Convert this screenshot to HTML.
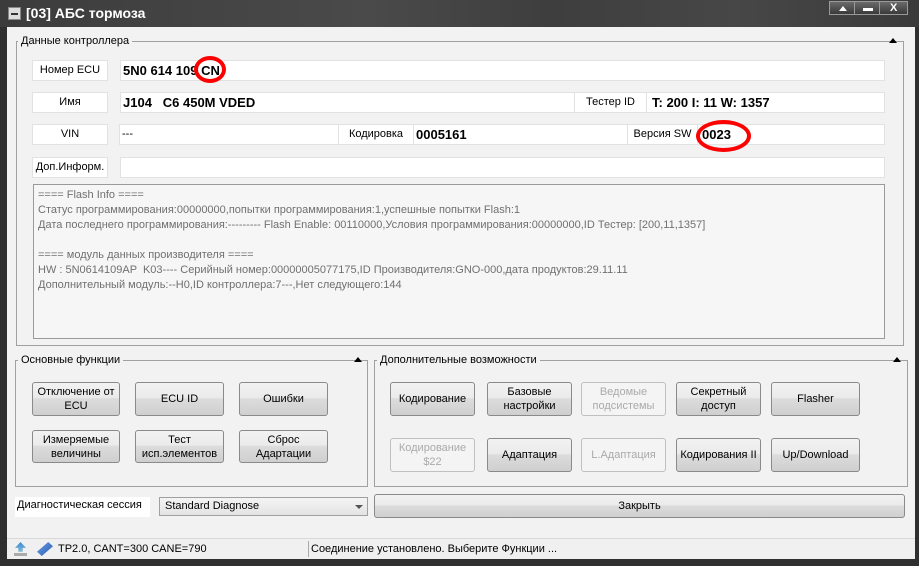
<!DOCTYPE html>
<html><head><meta charset="utf-8"><style>
*{margin:0;padding:0;box-sizing:border-box}
body{width:919px;height:566px;overflow:hidden;background:#2f2f2f;font-family:"Liberation Sans","DejaVu Sans",sans-serif;font-size:11px;color:#000;position:relative}
.a{position:absolute}
.title{left:0;top:0;width:919px;height:27px;background:linear-gradient(90deg,#3c3c3c 0%,#4a4a4a 40%,#3e3e3e 60%,#474747 80%,#3a3a3a 100%)}
.client{left:7px;top:27px;width:908px;height:532px;background:#f2f2f2}
.box{position:absolute;background:#fff;border:1px solid #e2e2e2}
.lbl{text-align:center;line-height:19px;font-size:11px}
.val{font-weight:bold;font-size:13px;line-height:19px;padding-left:2px}
.grp{position:absolute;border:1px solid #a0a0a0}
.gt{position:absolute;background:#f2f2f2;padding:0 3px;font-size:11px;line-height:12px}
.btn{position:absolute;border:1px solid #8a8a8a;border-radius:3px;background:linear-gradient(#f2f2f2 0%,#ebebeb 45%,#dcdcdc 50%,#cfcfcf 100%);text-align:center;font-size:11px;line-height:14px;display:flex;align-items:center;justify-content:center}
.dis{border-color:#c0c0c0;background:#f4f4f4;color:#aaa}
.tri{position:absolute;width:0;height:0;border-left:4px solid transparent;border-right:4px solid transparent;border-bottom:5px solid #000}
.ring{position:absolute;border:4px solid #f00;border-radius:50%}
</style></head><body>
<div class="a title"></div>
<div class="a" style="left:8px;top:7px;width:13px;height:13px;background:#ddd;border:1px solid #888"><div style="margin:5px 2px;height:2px;background:#333"></div></div>
<div class="a" style="left:26px;top:5px;color:#fff;font-size:14px;font-weight:bold">[03] АБС тормоза</div>
<div class="a" style="left:829px;top:1px;width:79px;height:14px;border:1px solid #999;background:linear-gradient(#6a6a6a,#3a3a3a);display:flex">
<div style="flex:1;border-right:1px solid #999;position:relative"><div class="tri" style="left:9px;top:4px;border-bottom-color:#fff"></div></div>
<div style="flex:1;border-right:1px solid #999;position:relative"><div style="position:absolute;left:8px;top:6px;width:10px;height:3px;background:#fff"></div></div>
<div style="flex:1.1;color:#fff;font-weight:bold;text-align:center;line-height:12px">X</div></div>
<div class="a client"></div>

<div class="grp" style="left:16px;top:41px;width:888px;height:305px"></div>
<div class="gt" style="left:18px;top:35px">Данные контроллера</div>
<div class="tri" style="left:889px;top:38px"></div>

<div class="box lbl" style="left:32px;top:60px;width:76px;height:21px">Номер ECU</div>
<div class="box val" style="left:120px;top:60px;width:765px;height:21px">5N0 614 109 CN</div>
<div class="box lbl" style="left:32px;top:92px;width:76px;height:21px">Имя</div>
<div class="box val" style="left:120px;top:92px;width:455px;height:21px">J104&nbsp;&nbsp;&nbsp;C6 450M VDED</div>
<div class="box lbl" style="left:574px;top:92px;width:73px;height:21px">Тестер ID</div>
<div class="box val" style="left:646px;top:92px;width:239px;height:21px;padding-left:5px">T: 200 I: 11 W: 1357</div>
<div class="box lbl" style="left:32px;top:124px;width:76px;height:21px">VIN</div>
<div class="box" style="left:119px;top:124px;width:220px;height:21px;line-height:19px;padding-left:2px">---</div>
<div class="box lbl" style="left:338px;top:124px;width:76px;height:21px">Кодировка</div>
<div class="box val" style="left:413px;top:124px;width:215px;height:21px">0005161</div>
<div class="box lbl" style="left:627px;top:124px;width:71px;height:21px">Версия SW</div>
<div class="box val" style="left:697px;top:124px;width:188px;height:21px;padding-left:4px">0023</div>
<div class="box lbl" style="left:32px;top:157px;width:76px;height:21px">Доп.Информ.</div>
<div class="box" style="left:120px;top:157px;width:765px;height:21px"></div>

<div class="a" style="left:33px;top:184px;width:852px;height:155px;border:1px solid #9a9a9a;background:#f6f6f6;color:#707070;font-size:11px;line-height:15px;padding:3px 0 0 4px;white-space:pre">==== Flash Info ====
Статус программирования:00000000,попытки программирования:1,успешные попытки Flash:1
Дата последнего программирования:--------- Flash Enable: 00110000,Условия программирования:00000000,ID Тестер: [200,11,1357]

==== модуль данных производителя ====
HW : 5N0614109AP  K03---- Серийный номер:00000005077175,ID Производителя:GNO-000,дата продуктов:29.11.11
Дополнительный модуль:--H0,ID контроллера:7---,Нет следующего:144</div>

<div class="ring" style="left:194px;top:56px;width:32px;height:27px"></div>
<div class="ring" style="left:696px;top:120px;width:55px;height:32px"></div>

<div class="grp" style="left:15px;top:360px;width:353px;height:127px"></div>
<div class="gt" style="left:18px;top:354px">Основные функции</div>
<div class="tri" style="left:354px;top:357px"></div>
<div class="btn" style="left:32px;top:382px;width:88px;height:34px">Отключение от<br>ECU</div>
<div class="btn" style="left:135px;top:382px;width:89px;height:34px">ECU ID</div>
<div class="btn" style="left:239px;top:382px;width:89px;height:34px">Ошибки</div>
<div class="btn" style="left:32px;top:430px;width:88px;height:33px">Измеряемые<br>величины</div>
<div class="btn" style="left:135px;top:430px;width:89px;height:33px">Тест<br>исп.элементов</div>
<div class="btn" style="left:239px;top:430px;width:89px;height:33px">Сброс<br>Адартации</div>

<div class="grp" style="left:374px;top:360px;width:534px;height:127px"></div>
<div class="gt" style="left:377px;top:354px">Дополнительные возможности</div>
<div class="tri" style="left:893px;top:357px"></div>
<div class="btn" style="left:390px;top:382px;width:85px;height:34px">Кодирование</div>
<div class="btn" style="left:487px;top:382px;width:85px;height:34px">Базовые<br>настройки</div>
<div class="btn dis" style="left:581px;top:382px;width:85px;height:34px">Ведомые<br>подсистемы</div>
<div class="btn" style="left:676px;top:382px;width:85px;height:34px">Секретный<br>доступ</div>
<div class="btn" style="left:771px;top:382px;width:89px;height:34px">Flasher</div>
<div class="btn dis" style="left:390px;top:438px;width:85px;height:34px">Кодирование<br>$22</div>
<div class="btn" style="left:487px;top:438px;width:85px;height:34px">Адаптация</div>
<div class="btn dis" style="left:581px;top:438px;width:85px;height:34px">L.Адаптация</div>
<div class="btn" style="left:676px;top:438px;width:85px;height:34px">Кодирования II</div>
<div class="btn" style="left:771px;top:438px;width:89px;height:34px">Up/Download</div>

<div class="a" style="left:15px;top:497px;width:135px;height:20px;background:#fff;line-height:17px;padding-left:2px">Диагностическая сессия</div>
<div class="a" style="left:159px;top:497px;width:209px;height:19px;border:1px solid #a0a0a0;background:linear-gradient(#f4f4f4,#e4e4e4);line-height:16px;padding-left:5px">Standard Diagnose<div class="a" style="right:4px;top:7px;border-left:4px solid transparent;border-right:4px solid transparent;border-top:4px solid #555"></div></div>
<div class="btn" style="left:374px;top:494px;width:531px;height:24px">Закрыть</div>

<div class="a" style="left:7px;top:538px;width:908px;height:21px;background:#f0f0f0;border-top:1px solid #d8d8d8"></div>
<div class="a" style="left:15px;top:542px;width:11px;height:13px;background:linear-gradient(#3a8ad8,#9cc);clip-path:polygon(50% 0,100% 45%,70% 45%,70% 75%,30% 75%,30% 45%,0 45%)"></div>
<div class="a" style="left:14px;top:553px;width:13px;height:3px;background:#aaa"></div>
<div class="a" style="left:37px;top:542px;width:16px;height:14px;background:linear-gradient(135deg,#6aa0e8,#2a5ab0);clip-path:polygon(70% 0,100% 30%,30% 100%,0 70%)"></div>
<div class="a" style="left:58px;top:543px;font-size:11px">TP2.0, CANT=300 CANE=790</div>
<div class="a" style="left:308px;top:541px;width:1px;height:16px;background:#aaa"></div>
<div class="a" style="left:311px;top:543px;font-size:11px">Соединение установлено. Выберите Функции ...</div>
</body></html>
